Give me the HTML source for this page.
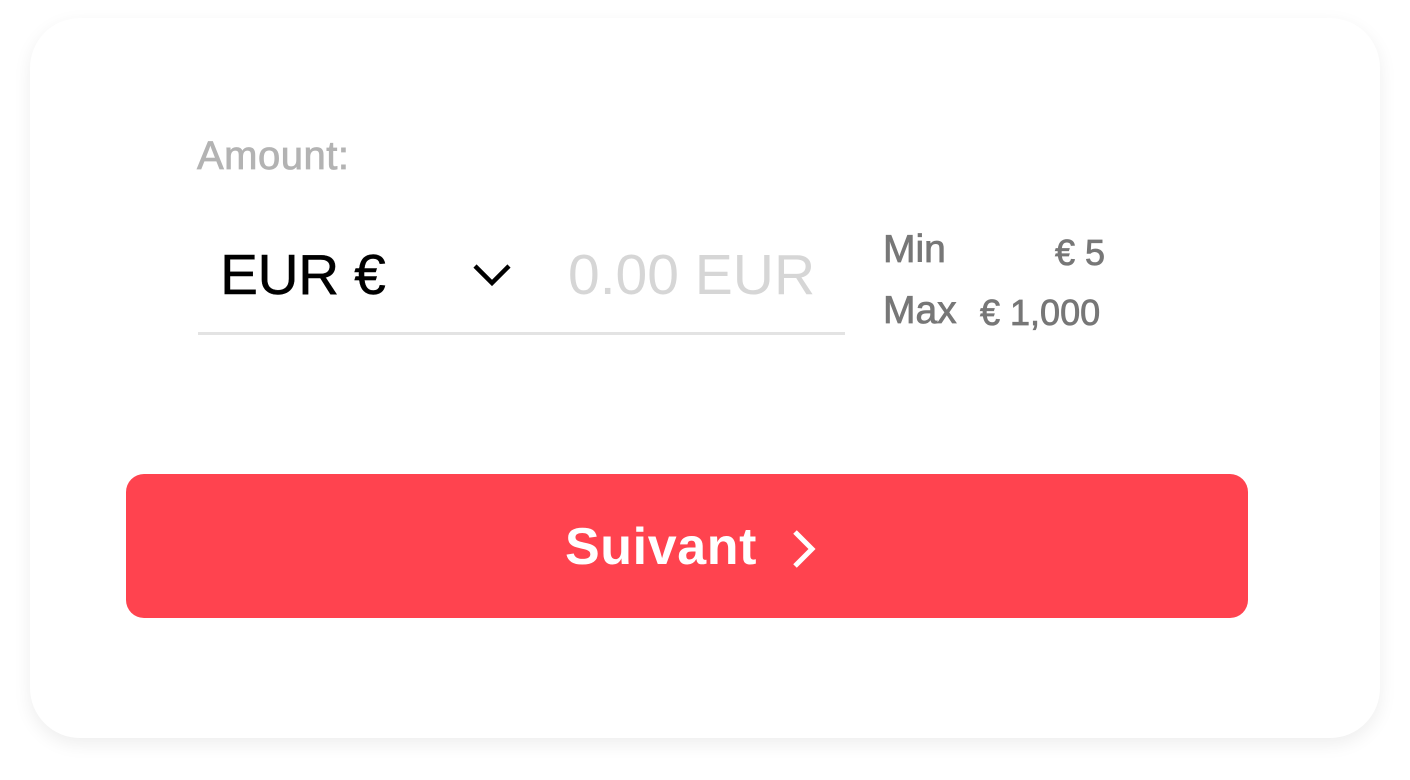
<!DOCTYPE html>
<html><head><meta charset="utf-8"><style>
html,body{margin:0;padding:0;width:1410px;height:780px;background:#fff;overflow:hidden;font-family:"Liberation Sans",sans-serif}
.card{position:absolute;left:30px;top:18px;width:1350px;height:720px;border-radius:50px;background:#fff;box-shadow:0 6px 18px rgba(0,0,0,0.07)}
.t{position:absolute;white-space:nowrap}
.m{-webkit-text-stroke:0.8px currentColor}
</style></head><body>
<div class="card"></div>
<div class="t m" style="left:197px;top:134px;font-size:40px;letter-spacing:0.5px;color:#b3b3b3">Amount:</div>
<div class="t" style="left:220px;top:242px;font-size:57px;letter-spacing:-0.5px;color:#000;-webkit-text-stroke:0.4px #000">EUR €</div>
<svg style="position:absolute;left:472px;top:262px" width="40" height="26"><path d="M3 4 L20 21 L37 4" fill="none" stroke="#000" stroke-width="4.5"/></svg>
<div class="t" style="left:568px;top:242px;font-size:57px;color:#d6d6d6">0.00 EUR</div>
<div style="position:absolute;left:198px;top:332px;width:647px;height:3px;background:#e3e3e3"></div>
<div class="t m" style="left:883px;top:228px;font-size:39px;color:#777">Min</div>
<div class="t m" style="left:1055px;top:232px;font-size:36px;color:#777">€ 5</div>
<div class="t m" style="left:883px;top:289px;font-size:39px;color:#777">Max</div>
<div class="t m" style="left:980px;top:292px;font-size:36px;color:#777">€ 1,000</div>
<div style="position:absolute;left:126px;top:474px;width:1122px;height:144px;border-radius:18px;background:#ff434f"></div>
<div class="t" style="left:565px;top:517px;font-size:52px;letter-spacing:0.6px;font-weight:bold;color:#fff">Suivant</div>
<svg style="position:absolute;left:790px;top:528px" width="30" height="42"><path d="M5 4 L22 21 L5 38" fill="none" stroke="#fff" stroke-width="5"/></svg>
</body></html>
